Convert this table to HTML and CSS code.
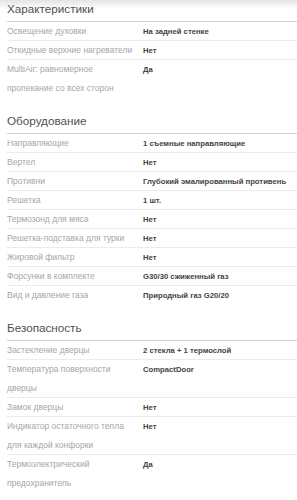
FILE: index.html
```html
<!DOCTYPE html>
<html lang="ru">
<head>
<meta charset="utf-8">
<title>Характеристики</title>
<link rel="stylesheet" href="styles.css">
</head>
<body>
<div class="page">
  <section class="group">
    <h2 class="group-title">Характеристики</h2>
    <div class="row"><div class="label">Освещение духовки</div><div class="value">На задней стенке</div></div>
    <div class="row"><div class="label">Откидные верхние нагреватели</div><div class="value">Нет</div></div>
    <div class="row"><div class="label">MultiAir: равномерное пропекание со всех сторон</div><div class="value">Да</div></div>
  </section>
  <section class="group">
    <h2 class="group-title">Оборудование</h2>
    <div class="row"><div class="label">Направляющие</div><div class="value">1 съемные направляющие</div></div>
    <div class="row"><div class="label">Вертел</div><div class="value">Нет</div></div>
    <div class="row"><div class="label">Противни</div><div class="value">Глубокий эмалированный противень</div></div>
    <div class="row"><div class="label">Решетка</div><div class="value">1 шт.</div></div>
    <div class="row"><div class="label">Термозонд для мяса</div><div class="value">Нет</div></div>
    <div class="row"><div class="label">Решетка-подставка для турки</div><div class="value">Нет</div></div>
    <div class="row"><div class="label">Жировой фильтр</div><div class="value">Нет</div></div>
    <div class="row"><div class="label">Форсунки в комплекте</div><div class="value">G30/30 сжиженный газ</div></div>
    <div class="row"><div class="label">Вид и давление газа</div><div class="value">Природный газ G20/20</div></div>
  </section>
  <section class="group">
    <h2 class="group-title">Безопасность</h2>
    <div class="row"><div class="label">Застекление дверцы</div><div class="value">2 стекла + 1 термослой</div></div>
    <div class="row"><div class="label">Температура поверхности дверцы</div><div class="value">CompactDoor</div></div>
    <div class="row"><div class="label">Замок дверцы</div><div class="value">Нет</div></div>
    <div class="row"><div class="label">Индикатор остаточного тепла для каждой конфорки</div><div class="value">Нет</div></div>
    <div class="row"><div class="label">Термоэлектрический предохранитель</div><div class="value">Да</div></div>
  </section>
</div>
</body>
</html>
```
FILE: styles.css
```css
html, body {
  margin: 0;
  padding: 0;
}
body {
  background: #fff linear-gradient(to bottom, #e4e4e4 0, #fff 9px) no-repeat;
  font-family: "Liberation Sans", Arial, sans-serif;
  overflow: hidden;
}
.page {
  padding-left: 7px;
  display: flex;
  flex-direction: column;
  gap: 14px;
}
.group-title {
  margin: 0;
  font-size: 11.7px;
  font-weight: normal;
  line-height: 18px;
  padding-bottom: 3px;
  color: #505050;
  border-bottom: 1px solid #d2d2d2;
}
.row {
  display: grid;
  grid-template-columns: 136px 1fr;
  font-size: 8.5px;
  line-height: 19px;
  box-shadow: inset 0 -1px 0 #ececec;
}
.row:last-child {
  box-shadow: none;
}
.label {
  color: #a6a6a6;
  padding-right: 8px;
}
.value {
  color: #444;
  font-size: 7.7px;
  font-weight: bold;
  white-space: nowrap;
}
```
